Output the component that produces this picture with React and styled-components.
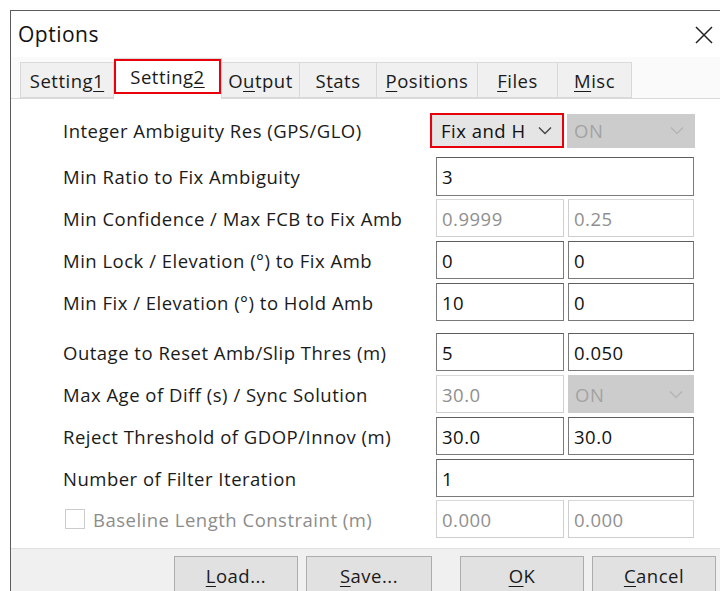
import React from 'react'
import styled, { createGlobalStyle, css } from 'styled-components'

const GlobalStyle = createGlobalStyle`
  html, body {
    margin: 0;
    padding: 0;
    background: #fff;
    overflow: hidden;
  }
  body {
    font-family: 'Open Sans', 'Noto Sans', sans-serif;
    color: #000;
  }
`

const ui = {
  font: `'Open Sans', 'Noto Sans', sans-serif`,
  size: '18.5px',
  spacing: '0.5px',
  frame: '#5c5c5c',
  face: '#f0f0f0',
  tabBorder: '#d9d9d9',
  field: '#7a7a7a',
  fieldOff: '#cfcfcf',
  textOff: '#8c8c8c',
  mark: '#e8000b',
}

// red annotation frame drawn over a control
const marked = css`
  position: relative;
  &:after {
    content: '';
    position: absolute;
    pointer-events: none;
    border: 2px solid ${ui.mark};
    inset: ${p => p.$markInset || '-2px'};
  }
`

const Window = styled.div`
  margin: 10px 0 0 10px;
  height: 581px;
  border-top: 1px solid ${ui.frame};
  border-left: 1px solid ${ui.frame};
  display: flex;
  flex-direction: column;
  background: #fff;
  font-family: ${ui.font};
  font-size: ${ui.size};
  letter-spacing: ${ui.spacing};
`

const TitleBar = styled.div`
  height: 46px;
  display: flex;
  align-items: center;
  justify-content: space-between;
  padding: 0 6px 0 7px;
  font-size: 21px;
  color: #111;
`

const CloseButton = styled.div`
  width: 20px;
  height: 20px;
  display: flex;
  align-items: center;
  justify-content: center;
  margin-top: 2px;
`

const TabStrip = styled.div`
  height: 41px;
  display: flex;
  align-items: flex-end;
  padding-left: 9px;
  background: #fafafa;
  border-bottom: 1px solid ${ui.tabBorder};
`

const Tab = styled.div`
  box-sizing: border-box;
  width: ${p => p.$w}px;
  height: ${p => (p.$active ? 41 : 36)}px;
  margin-bottom: ${p => (p.$active ? -1 : 0)}px;
  display: flex;
  align-items: center;
  justify-content: center;
  padding-bottom: ${p => (p.$active ? 6 : 0)}px;
  color: #1a1a1a;
  white-space: nowrap;
  background: ${p => (p.$active ? '#fff' : ui.face)};
  border: 1px solid ${ui.tabBorder};
  border-bottom: ${p => (p.$active ? 'none' : `1px solid ${ui.tabBorder}`)};
  & + & {
    border-left: none;
  }
  ${p => p.$marked && marked}
`

const Key = styled.span`
  text-decoration: underline;
  text-underline-offset: 3px;
`

const Page = styled.div`
  flex: 1;
  padding: 13px 0 0 52px;
  display: flex;
  flex-direction: column;
  background: #fff;
`

const Row = styled.div`
  display: grid;
  grid-template-columns: 373px 258px;
  align-items: center;
  height: ${p => p.$h || 38}px;
  margin-bottom: ${p => p.$gap ?? 4}px;
`

const Label = styled.label`
  display: flex;
  align-items: center;
  gap: 8px;
  color: ${p => (p.$off ? ui.textOff : '#1a1a1a')};
  white-space: nowrap;
`

const Check = styled.span`
  box-sizing: border-box;
  width: 20px;
  height: 20px;
  margin-left: 2px;
  border: 1px solid #cccccc;
  background: #fff;
`

const Pair = styled.div`
  display: grid;
  grid-template-columns: ${p => (p.$single ? '1fr' : '128px 126px')};
  gap: 4px;
  height: 100%;
`

// the combo pair sits a little left of the edit boxes below it
const ComboPair = styled.div`
  display: grid;
  grid-template-columns: 131px 128px;
  gap: 4px;
  height: 34px;
  margin-left: -4px;
`

const Field = styled.div`
  box-sizing: border-box;
  height: 100%;
  display: flex;
  align-items: center;
  padding-left: 5px;
  background: #fff;
  color: ${p => (p.$off ? '#8f8f8f' : '#111')};
  border: 1px solid ${p => (p.$off ? ui.fieldOff : ui.field)};
  border-top-color: ${p => (p.$off ? '#d8d8d8' : '#5e5e5e')};
`

const Combo = styled.div`
  box-sizing: border-box;
  height: 100%;
  display: flex;
  align-items: center;
  justify-content: space-between;
  padding: 0 10px 0 ${p => (p.$off ? 6 : 8)}px;
  white-space: nowrap;
  color: ${p => (p.$off ? '#a3a3a3' : '#111')};
  background: ${p => (p.$off ? '#cccccc' : '#e5e5e5')};
  border: 1px solid ${p => (p.$off ? '#cccccc' : '#d6d6d6')};
  ${p => p.$marked && marked}
`

const ButtonBar = styled.div`
  box-sizing: border-box;
  height: 44px;
  display: flex;
  gap: 8px;
  padding: 7px 0 0 163px;
  background: ${ui.face};
  border-top: 1px solid #dfdfdf;
`

const Button = styled.div`
  box-sizing: border-box;
  flex: none;
  width: ${p => p.$w}px;
  height: 38px;
  margin-left: ${p => (p.$apart ? 20 : 0)}px;
  display: flex;
  align-items: center;
  justify-content: center;
  color: #1a1a1a;
  background: #e1e1e1;
  border: 1px solid #adadad;
`

const Chevron = ({ off }) => (
  <svg width="14" height="9" viewBox="0 0 14 9">
    <path d="M1 1.5 L7 7.5 L13 1.5" fill="none" stroke={off ? '#b5b5b5' : '#444'} strokeWidth="1.4" />
  </svg>
)

const CloseIcon = () => (
  <svg width="18" height="18" viewBox="0 0 18 18">
    <path d="M1 1 L17 17 M17 1 L1 17" stroke="#222" strokeWidth="1.5" />
  </svg>
)

const Accel = ({ text, at }) => (
  <>
    {text.slice(0, at)}
    <Key>{text[at]}</Key>
    {text.slice(at + 1)}
  </>
)

const tabs = [
  { text: 'Setting1', at: 7, w: 94 },
  { text: 'Setting2', at: 7, w: 108, active: true },
  { text: 'Output', at: 1, w: 78 },
  { text: 'Stats', at: 1, w: 77 },
  { text: 'Positions', at: 0, w: 101 },
  { text: 'Files', at: 0, w: 80 },
  { text: 'Misc', at: 0, w: 74 },
]

const rows = [
  { label: 'Integer Ambiguity Res (GPS/GLO)', h: 37, gap: 8, combo: true },
  { label: 'Min Ratio to Fix Ambiguity', single: '3', h: 39, gap: 3 },
  { label: 'Min Confidence / Max FCB to Fix Amb', values: ['0.9999', '0.25'], off: true },
  { label: 'Min Lock / Elevation (°) to Fix Amb', values: ['0', '0'] },
  { label: 'Min Fix / Elevation (°) to Hold Amb', values: ['10', '0'], gap: 12 },
  { label: 'Outage to Reset Amb/Slip Thres (m)', values: ['5', '0.050'] },
  { label: 'Max Age of Diff (s) / Sync Solution', values: ['30.0'], sync: true },
  { label: 'Reject Threshold of GDOP/Innov (m)', values: ['30.0', '30.0'] },
  { label: 'Number of Filter Iteration', single: '1', gap: 3 },
  { label: 'Baseline Length Constraint (m)', values: ['0.000', '0.000'], off: true, check: true },
]

const buttons = [
  { text: 'Load...', at: 0, w: 124 },
  { text: 'Save...', at: 0, w: 126 },
  { text: 'OK', at: 0, w: 124, apart: true },
  { text: 'Cancel', at: 0, w: 124 },
]

const renderField = row => {
  if (row.combo) {
    return (
      <ComboPair>
        <Combo $marked $markInset="-2px -2px -1px -3px">
          Fix and H <Chevron />
        </Combo>
        <Combo $off>
          ON <Chevron off />
        </Combo>
      </ComboPair>
    )
  }
  if (row.single) {
    return (
      <Pair $single>
        <Field>{row.single}</Field>
      </Pair>
    )
  }
  if (row.sync) {
    return (
      <Pair>
        <Field $off>{row.values[0]}</Field>
        <Combo $off>
          ON <Chevron off />
        </Combo>
      </Pair>
    )
  }
  return (
    <Pair>
      {row.values.map((v, i) => (
        <Field $off={row.off} key={i}>
          {v}
        </Field>
      ))}
    </Pair>
  )
}

export default function App() {
  return (
    <>
      <GlobalStyle />
      <Window>
        <TitleBar>
          <span>Options</span>
          <CloseButton>
            <CloseIcon />
          </CloseButton>
        </TitleBar>

        <TabStrip>
          {tabs.map(t => (
            <Tab key={t.text} $w={t.w} $active={t.active} $marked={t.active} $markInset="0 0 5px 0">
              <Accel text={t.text} at={t.at} />
            </Tab>
          ))}
        </TabStrip>

        <Page>
          {rows.map(row => (
            <Row key={row.label} $h={row.h} $gap={row.gap}>
              <Label $off={row.check}>
                {row.check && <Check />}
                {row.label}
              </Label>
              {renderField(row)}
            </Row>
          ))}
        </Page>

        <ButtonBar>
          {buttons.map(b => (
            <Button key={b.text} $w={b.w} $apart={b.apart}>
              <Accel text={b.text} at={b.at} />
            </Button>
          ))}
        </ButtonBar>
      </Window>
    </>
  )
}
